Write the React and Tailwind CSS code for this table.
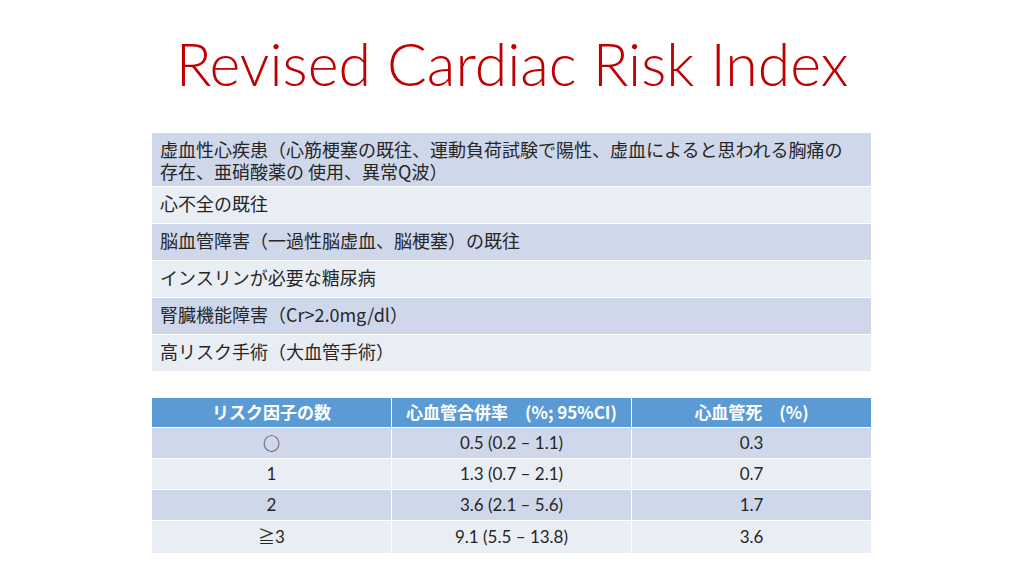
const risks = [
  ['虚血性心疾患（心筋梗塞の既往、運動負荷試験で陽性、虚血によると思われる胸痛の', '存在、亜硝酸薬の 使用、異常Q波）'],
  ['心不全の既往'],
  ['脳血管障害（一過性脳虚血、脳梗塞）の既往'],
  ['インスリンが必要な糖尿病'],
  ['腎臓機能障害（Cr>2.0mg/dl）'],
  ['高リスク手術（大血管手術）'],
];

const rates = [
  ['○', '0.5 (0.2 – 1.1)', '0.3'],
  ['1', '1.3 (0.7 – 2.1)', '0.7'],
  ['2', '3.6 (2.1 – 5.6)', '1.7'],
  ['≧3', '9.1 (5.5 – 13.8)', '3.6'],
];

const headers = ['リスク因子の数', '心血管合併率　(%; 95%CI)', '心血管死　(%)'];

export default function App() {
  return (
    <div className="w-[1024px] h-[576px] bg-white overflow-hidden">
      {/* Title */}
      <h1 className="pt-[32px] h-[133px] text-center text-[59px] leading-[64px] font-light text-[#c00000] font-['Lato','Noto_Sans',sans-serif]">
        Revised Cardiac Risk Index
      </h1>

      {/* Risk factors */}
      <div className="ml-[152px] w-[719px] flex flex-col gap-px text-[18px] text-[#262626] font-['Noto_Sans_CJK_JP','Noto_Sans',sans-serif]">
        {risks.map((lines, i) => (
          <div
            key={i}
            className={`px-2 pt-[5px] leading-[22px] ${i === 0 ? 'h-[53px]' : 'h-[36px]'} ${i % 2 === 0 ? 'bg-[#cfd8ea]' : 'bg-[#e9edf4]'}`}
          >
            {lines.map((l, j) => (
              <div key={j}>{l}</div>
            ))}
          </div>
        ))}
      </div>

      {/* Rates table */}
      <div className="ml-[152px] mt-[27px] w-[719px] grid grid-cols-3 gap-px text-center text-[17px] font-['Lato','Noto_Sans_CJK_JP',sans-serif]">
        {headers.map((h) => (
          <div
            key={h}
            className="h-[29px] leading-[28px] bg-[#5b9bd5] text-white font-bold font-['Noto_Sans_CJK_JP','Noto_Sans',sans-serif]"
          >
            {h}
          </div>
        ))}
        {rates.map((r, i) =>
          r.map((c, j) => (
            <div
              key={`${i}-${j}`}
              className={`${i === 3 ? 'h-[32px] leading-[32px]' : 'h-[30px] leading-[30px]'} text-[#262626] ${i % 2 === 0 ? 'bg-[#cfd8ea]' : 'bg-[#e9edf4]'}`}
            >
              {c === '○' ? <span className="font-['Noto_Sans_CJK_JP',sans-serif]">{c}</span> : c}
            </div>
          ))
        )}
      </div>
    </div>
  );
}
